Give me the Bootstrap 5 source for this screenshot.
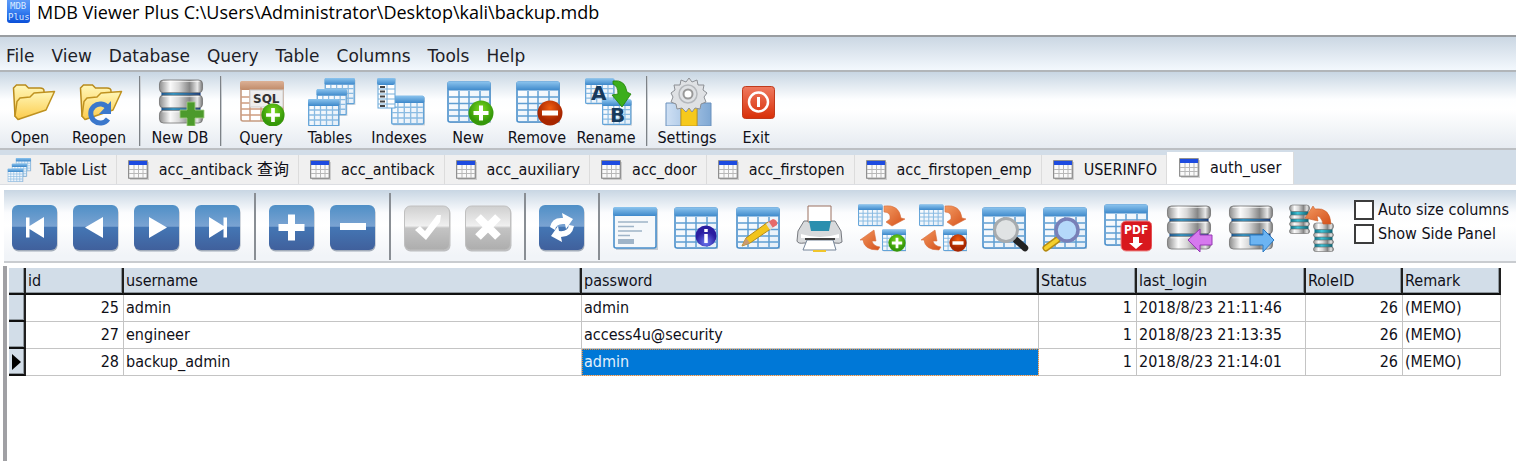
<!DOCTYPE html>
<html lang="en">
<head>
<meta charset="utf-8">
<meta name="viewport" content="width=device-width, initial-scale=1">
<title>MDB Viewer Plus</title>
<link rel="stylesheet" href="https://cdn.jsdelivr.net/npm/bootstrap@5.3.0/dist/css/bootstrap.min.css">
<script src="https://cdn.jsdelivr.net/npm/bootstrap@5.3.0/dist/js/bootstrap.bundle.min.js" defer></script>
<style>
  body { font-family: "DejaVu Sans Condensed", "DejaVu Sans", "Noto Sans CJK SC", sans-serif; font-size: 16px; line-height: 20px; color: #101018; background: #fff; }
  svg { display: block; flex: none; }
  .titlebar { height: 35px; padding-left: 7px; gap: 6px; font-family: "Open Sans", "Noto Sans", sans-serif; font-size: 18px; line-height: 24px; color: #000; }
  .menubar { height: 37px; padding: 4px 0 0 6px; gap: 17px; border-top: 2px solid #999da1; border-bottom: 2px solid #b1b5b9; background: linear-gradient(#cbd7e3, #f3f8fd); font-family: "DejaVu Sans", sans-serif; font-size: 17px; }
  .menubar a { color: #1e1e28; text-decoration: none; }
  .mainbar { height: 78px; gap: 9px; background: linear-gradient(#c8d6e3, #fdfeff 36%, #fff 50%, #e6ebf1); border-bottom: 2px solid #bcbfc3; }
  .tool { width: 60px; padding: 5px 0 0; border: 0; background: none; color: inherit; white-space: nowrap; }
  .tool svg { margin: 0 0 0 8px; }
  .tool span { display: flex; justify-content: center; margin-top: 2px; }
  .rule { width: 1px; margin: 4px 1px 2px; background: #7d8287; box-shadow: 1px 0 #c9ced3; }
  .tabstrip { height: 35px; padding-top: 2px; background: #d2dde8; border-bottom: 1px solid #dcdee2; }
  .sheet { height: 29px; padding: 0 9px 0 11px; gap: 10px; border: 0; border-right: 1px solid #dcdcdc; background: #f0f0f0; color: inherit; white-space: nowrap; }
  .sheet:first-child { padding-left: 7px; gap: 8px; }
  .sheet.current { height: 32px; padding: 0 12px; background: #fff; }
  .navbar-strip { height: 73px; margin: 5px 0 0 4px; padding-left: 7px; background: linear-gradient(#c8d6e3, #fbfcfe 32%, #fff 50%, #f1f4f8 92%); border-bottom: 2px solid #c9ccd0; }
  .tools2 { gap: 13px; padding-top: 14px; }
  .tools2.wide { width: 724px; gap: 0; }
  .tools2 button { border: 0; padding: 0; background: none; width: 48px; height: 48px; }
  .navbar-strip .rule { width: 2px; margin: 3px 12px 1px; background: #898e94; box-shadow: none; }
  .opts { padding: 10px 0 0 18px; gap: 4px; white-space: nowrap; }
  .opts input { appearance: none; flex: none; width: 20px; height: 20px; margin: 0 4px 0 0; border: 2px solid #3c3c3c; background: #fff; }
  .gridpane { min-height: 195px; margin: 3px 0 0 3px; border-left: 4px solid #a0a0a4; padding: 2px 0 0 2px; }
  .datagrid { table-layout: fixed; width: 1492px; border-collapse: separate; border-spacing: 0; line-height: 20px; }
  .datagrid th { height: 27px; padding: 0 2px; font-weight: 400; background: #d2dde8; border-right: 2px solid #202020; border-bottom: 2px solid #101010; box-shadow: inset -1px -1px #8f989f; }
  .datagrid td { height: 27px; padding: 0 4px 0 2px; border-right: 1px solid #c4c4c4; border-bottom: 1px solid #c4c4c4; white-space: nowrap; }
  .datagrid tbody th { padding: 0 0 0 3px; }
  .datagrid td.picked { background: #0078d7; color: #e4f0fb; outline: 1px dotted #e08a3c; outline-offset: -1px; }
</style>
</head>
<body>
<svg width="0" height="0" class="position-absolute" aria-hidden="true">
  <defs>
    <linearGradient id="gHead" x2="0" y2="1"><stop stop-color="#8cc4ee"/><stop offset="1" stop-color="#3d88ca"/></linearGradient>
    <linearGradient id="gBrown" x2="0" y2="1"><stop stop-color="#dcb196"/><stop offset="1" stop-color="#c08a68"/></linearGradient>
    <linearGradient id="gBody" x2="1" y2="1"><stop stop-color="#fff"/><stop offset="1" stop-color="#e4eef8"/></linearGradient>
    <linearGradient id="gFold" x2="0" y2="1"><stop stop-color="#fff7b8"/><stop offset="1" stop-color="#fccb4b"/></linearGradient>
    <linearGradient id="gMetal"><stop stop-color="#8d8d8d"/><stop offset=".25" stop-color="#fafafa"/><stop offset=".45" stop-color="#d8d8d8"/><stop offset=".7" stop-color="#868686"/><stop offset=".88" stop-color="#e8e8e8"/><stop offset="1" stop-color="#777"/></linearGradient>
    <linearGradient id="gBand"><stop stop-color="#16508e"/><stop offset=".3" stop-color="#2a9bd0"/><stop offset="1" stop-color="#163a7c"/></linearGradient>
    <linearGradient id="gTeal"><stop stop-color="#0e6d80"/><stop offset=".4" stop-color="#40c4d8"/><stop offset="1" stop-color="#0d6272"/></linearGradient>
    <linearGradient id="gBlue" x2="0" y2="1"><stop stop-color="#4f8fc6"/><stop offset=".47" stop-color="#7aa3d2"/><stop offset=".5" stop-color="#4476b4"/><stop offset="1" stop-color="#40609c"/></linearGradient>
    <linearGradient id="gGray" x2="0" y2="1"><stop stop-color="#cfcfcf"/><stop offset=".45" stop-color="#f0f0f0"/><stop offset=".5" stop-color="#c4c4c4"/><stop offset="1" stop-color="#adadad"/></linearGradient>
    <radialGradient id="gGreen" cy=".35"><stop stop-color="#7ddc1e"/><stop offset="1" stop-color="#36980a"/></radialGradient>
    <radialGradient id="gRed" cy=".3"><stop stop-color="#ef5d10"/><stop offset="1" stop-color="#a82600"/></radialGradient>
    <radialGradient id="gInfo" cy=".8"><stop stop-color="#6d78f0"/><stop offset="1" stop-color="#2a1ea0"/></radialGradient>
    <linearGradient id="gExit" x2="0" y2="1"><stop stop-color="#ef7a60"/><stop offset="1" stop-color="#d82f08"/></linearGradient>
    <linearGradient id="gOrange" x2="1" y2="1"><stop stop-color="#f39a62"/><stop offset="1" stop-color="#d4501a"/></linearGradient>
    <linearGradient id="gApp" x2="0" y2="1"><stop stop-color="#6aa2f8"/><stop offset=".5" stop-color="#3f86f4"/><stop offset="1" stop-color="#0a4fd8"/></linearGradient>
    <linearGradient id="gTool"><stop stop-color="#cfe0f4"/><stop offset="1" stop-color="#7fa8d4"/></linearGradient>

    <symbol id="tbl" viewBox="0 0 45 43">
      <path d="M3 2h41v40H3z" fill="#8b98a6" opacity=".45"/>
      <rect x="1" y="1" width="42" height="40" rx="2" fill="url(#gBody)" stroke="#4a8fcb" stroke-width="1.6"/>
      <path d="M12 10v30M22 10v30M33 10v30M2 16h40M2 22.500h40M2 29h40M2 35h40" stroke="#5f9ed2" stroke-width="1.500"/>
      <rect x=".5" y=".5" width="43" height="9" rx="2" fill="url(#gHead)"/>
    </symbol>
    <symbol id="tblS" viewBox="0 0 32 28">
      <path d="M2 2h30v26H2z" fill="#8b98a6" opacity=".4"/>
      <rect x=".7" y=".7" width="30" height="26" rx="1" fill="url(#gBody)" stroke="#62a3d8" stroke-width="1.300"/>
      <path d="M6.500 7v19M12.500 7v19M18.500 7v19M24.500 7v19M1 11h29M1 16h29M1 21h29" stroke="#8abbe2" stroke-width="1.300"/>
      <rect width="31.400" height="7" rx="1.500" fill="url(#gHead)"/>
    </symbol>
    <symbol id="plus" viewBox="0 0 26 26"><circle cx="13" cy="13" r="12.500" fill="url(#gGreen)"/><path d="M13 5.500v15M5.500 13h15" stroke="#fff" stroke-width="4"/></symbol>
    <symbol id="minus" viewBox="0 0 26 26"><circle cx="13" cy="13" r="12.500" fill="url(#gRed)"/><path d="M5 13h16" stroke="#fff" stroke-width="5"/></symbol>
    <symbol id="folder" viewBox="0 0 44 38">
      <path d="M1.500 5l3-3h9l3 3H28q4 0 4 3v7L7 36l-4-3z" fill="url(#gFold)" stroke="#b88a1c" stroke-width="1.500"/>
      <path d="M6 36.500L3 33 5 18.500 8 15l10-1 4-4 20.500-1.500L34 27z" fill="url(#gFold)" stroke="#bf9220" stroke-width="1.500" stroke-linejoin="round"/>
    </symbol>
    <symbol id="disks" viewBox="0 0 46 46">
      <path d="M3 12h40v22H3z" fill="url(#gBand)"/>
      <g fill="url(#gMetal)" stroke="#707070" stroke-width=".8"><rect x="1" y="1" width="44" height="13" rx="4"/><rect x="1" y="16.500" width="44" height="13" rx="4"/><rect x="1" y="32" width="44" height="13" rx="4"/></g>
      <path d="M4 2.500h38M4 18h38M4 33.500h38" stroke="#fff" opacity=".7"/>
    </symbol>
    <symbol id="can" viewBox="0 0 22 30">
      <rect x="2" y="3" width="18" height="24" fill="url(#gTeal)"/>
      <g fill="url(#gMetal)" stroke="#666" stroke-width=".6"><rect x="1" y="1" width="20" height="6.500" rx="3"/><rect x="1" y="11" width="20" height="4" rx="2"/><rect x="1" y="18" width="20" height="4" rx="2"/><rect x="1" y="25" width="20" height="4.500" rx="2"/></g>
    </symbol>
    <symbol id="blue" viewBox="0 0 48 48"><rect x="1.500" y="2.500" width="45" height="45" rx="6" fill="#52647c" opacity=".5"/><rect x="1" y="1" width="45" height="45" rx="6" fill="url(#gBlue)"/></symbol>
    <symbol id="gray" viewBox="0 0 48 48"><rect x="1.500" y="3" width="46" height="44.500" rx="6" fill="#999" opacity=".6"/><rect x="1.500" y="2" width="45" height="44" rx="6" fill="url(#gGray)" stroke="#c0c0c0"/></symbol>
    <symbol id="swap" viewBox="0 0 48 48">
      <use href="#tblS" width="25" height="23"/>
      <path d="M26 2Q41 0 43 14L47 15 34 22 28 18 32 15Q33 8 26 8z" fill="url(#gOrange)" stroke="#d8713f" stroke-width=".6"/>
      <path d="M2 36L16 26 18 37 14 37Q15 42 22 43L20 46Q6 46 5 36z" fill="url(#gOrange)" stroke="#d8713f" stroke-width=".6"/>
      <use href="#tblS" x="24" y="25" width="25" height="23"/>
    </symbol>
    <symbol id="sheet" viewBox="0 0 21 20">
      <path d="M2 2h19v18H2z" fill="#aaa" opacity=".5"/><rect x=".7" y=".7" width="18.500" height="17.500" fill="#fafafa" stroke="#777"/>
      <path d="M6 5v13M10.500 5v13M15 5v13M1 9.500h18M1 13.500h18" stroke="#b8b8b8"/><path d="M1 1h18v4H1z" fill="#1d4be0"/>
    </symbol>
  </defs>
</svg>

<header class="titlebar d-flex">
  <svg width="24" height="24" viewBox="0 0 24 24"><rect y="-4" width="23" height="27" rx="3" fill="url(#gApp)"/><g fill="#dcebff" font-family="DejaVu Sans Mono" font-size="9"><text x="3" y="9">MDB</text><text x="1" y="20">Plus</text></g></svg>
  <span>MDB Viewer Plus C:\Users\Administrator\Desktop\kali\backup.mdb</span>
</header>

<nav class="menubar d-flex align-items-center">
  <a href="#">File</a><a href="#">View</a><a href="#">Database</a><a href="#">Query</a><a href="#">Table</a><a href="#">Columns</a><a href="#">Tools</a><a href="#">Help</a>
</nav>

<div class="mainbar d-flex" role="toolbar" aria-label="Main">
  <button class="tool"><svg width="48" height="48"><use href="#folder" x="4" y="5" width="44" height="38"/></svg><span>Open</span></button>
  <button class="tool"><svg width="48" height="48"><use href="#folder" x="2" y="5" width="44" height="38"/><path d="M31 30A9.500 9.500 0 1 0 31 41" fill="none" stroke="#3b78cc" stroke-width="5"/><path d="M34 23V36H22z" fill="#3b78cc"/></svg><span>Reopen</span></button>
  <div class="rule"></div>
  <button class="tool"><svg width="48" height="48"><use href="#disks" x="0" y="1" width="46" height="45"/><path d="M29 24h8v8h9v8h-9v8h-8v-8h-7v-8h7z" fill="#4c9a2c" stroke="#a8d08c" stroke-width=".8"/></svg><span>New DB</span></button>
  <div class="rule"></div>
  <button class="tool"><svg width="48" height="48"><rect x="2" y="4" width="42" height="39" rx="2" fill="#fff" stroke="#c59a80" stroke-width="1.600"/><path d="M11 12v31M22 12v31M33 12v31M2 19h42M2 25h42M2 31h42M2 37h42" stroke="#ce9d80" stroke-width="1.500"/><rect x="1" y="3" width="44" height="9" rx="2" fill="url(#gBrown)"/><rect x="11" y="12" width="33" height="17" fill="#eee" stroke="#ccc"/><text x="14" y="25" font-family="DejaVu Sans" font-weight="700" font-size="12" fill="#333">SQL</text><use href="#plus" x="22" y="25" width="24" height="24"/></svg><span>Query</span></button>
  <button class="tool"><svg width="48" height="48"><use href="#tblS" x="16" width="32" height="27"/><use href="#tblS" x="8" y="11" width="32" height="27"/><use href="#tblS" x="0" y="21" width="32" height="28"/></svg><span>Tables</span></button>
  <button class="tool"><svg width="48" height="48"><use href="#tblS" x="14" y="17" width="34" height="31"/><rect x="1" y="1" width="17" height="29" fill="#fff" stroke="#65a5d8"/><path d="M10 6v24M1 11h17M1 16h17M1 21h17M1 26h17" stroke="#79afd9"/><path d="M3 9h5M3 13.500h5M3 18.500h5M3 23.500h5M3 28h5" stroke="#444" stroke-width="2"/><rect width="18" height="7" rx="2" fill="url(#gHead)"/></svg><span>Indexes</span></button>
  <button class="tool"><svg width="48" height="48"><use href="#tbl" x="1" y="3" width="45" height="43"/><use href="#plus" x="22" y="22" width="26" height="26"/></svg><span>New</span></button>
  <button class="tool"><svg width="48" height="48"><use href="#tbl" x="1" y="3" width="45" height="43"/><use href="#minus" x="22" y="22" width="26" height="26"/></svg><span>Remove</span></button>
  <button class="tool"><svg class="overflow-visible" width="48" height="48"><use href="#tblS" x="1" width="30" height="27"/><use href="#tblS" x="18" y="21" width="30" height="27"/><g font-family="DejaVu Sans" font-weight="700" font-size="20" fill="#173a5c"><text x="7" y="22">A</text><text x="26" y="44">B</text></g><path d="M29 3Q41 1 43 14L47 16 38 29 28 17 34 16Q34 8 29 6z" fill="#3cae1c" stroke="#238208" stroke-width=".8"/></svg><span>Rename</span></button>
  <div class="rule"></div>
  <button class="tool"><svg width="48" height="48"><path d="M1 25h15v23H1zM32 25h14v23H32z" fill="url(#gTool)" stroke="#6a91bd"/><path d="M16 28h16v20H16z" fill="#f6c91c" stroke="#c89b18"/><path d="M24 0l3 4 5-2 1 5 6 0-1 5 4 3-3 4 2 5-5 2-1 5-5-1-3 4-3-4-3 4-4-4-5 1-1-5-5-2 2-5-2-4 4-3-1-5 6 0 1-5 5 2z" fill="#dfe1e4" stroke="#8c8f94"/><circle cx="23" cy="16" r="9" fill="none" stroke="#b5b8bc" stroke-width="1.500"/><circle cx="23" cy="16" r="4.500" fill="#fff" stroke="#999" stroke-width="2"/></svg><span>Settings</span></button>
  <button class="tool"><svg width="48" height="48"><rect x="8.500" y="8.500" width="32" height="32" rx="3" fill="url(#gExit)" stroke="#c03a1c"/><circle cx="24.500" cy="24" r="9.500" fill="none" stroke="#fff" stroke-width="2.500"/><path d="M24.500 19v10" stroke="#fff" stroke-width="3"/></svg><span>Exit</span></button>
</div>

<div class="tabstrip d-flex align-items-end" role="tablist">
  <button class="sheet d-flex align-items-center" role="tab"><svg width="25" height="24" viewBox="0 0 48 48"><use href="#tblS" x="16" width="32" height="27"/><use href="#tblS" x="8" y="11" width="32" height="27"/><use href="#tblS" x="0" y="21" width="32" height="28"/></svg>Table List</button>
  <button class="sheet d-flex align-items-center" role="tab"><svg width="21" height="20"><use href="#sheet"/></svg>acc_antiback 查询</button>
  <button class="sheet d-flex align-items-center" role="tab"><svg width="21" height="20"><use href="#sheet"/></svg>acc_antiback</button>
  <button class="sheet d-flex align-items-center" role="tab"><svg width="21" height="20"><use href="#sheet"/></svg>acc_auxiliary</button>
  <button class="sheet d-flex align-items-center" role="tab"><svg width="21" height="20"><use href="#sheet"/></svg>acc_door</button>
  <button class="sheet d-flex align-items-center" role="tab"><svg width="21" height="20"><use href="#sheet"/></svg>acc_firstopen</button>
  <button class="sheet d-flex align-items-center" role="tab"><svg width="21" height="20"><use href="#sheet"/></svg>acc_firstopen_emp</button>
  <button class="sheet d-flex align-items-center" role="tab"><svg width="21" height="20"><use href="#sheet"/></svg>USERINFO</button>
  <button class="sheet current d-flex align-items-center" role="tab" aria-selected="true"><svg width="21" height="20"><use href="#sheet"/></svg>auth_user</button>
</div>

<div class="navbar-strip d-flex" role="toolbar" aria-label="Records">
  <div class="tools2 d-flex">
    <button aria-label="First"><svg width="48" height="48"><use href="#blue"/><path d="M15 13.500h3.500v8.500L33 13v21L18.500 25v8.500H15z" fill="#fff"/></svg></button>
    <button aria-label="Previous"><svg width="48" height="48"><use href="#blue"/><path d="M13 23.500L31 13v21z" fill="#fff"/></svg></button>
    <button aria-label="Next"><svg width="48" height="48"><use href="#blue"/><path d="M34 23.500L16 13v21z" fill="#fff"/></svg></button>
    <button aria-label="Last"><svg width="48" height="48"><use href="#blue"/><path d="M33 13.500h-3.500v8.500L15 13v21L29.500 25v8.500H33z" fill="#fff"/></svg></button>
  </div>
  <div class="rule"></div>
  <div class="tools2 d-flex">
    <button aria-label="Insert"><svg width="48" height="48"><use href="#blue"/><path d="M23.500 10.500v26M10.500 23.500h26" stroke="#fff" stroke-width="7"/></svg></button>
    <button aria-label="Delete"><svg width="48" height="48"><use href="#blue"/><path d="M11 22.500h26" stroke="#fff" stroke-width="7"/></svg></button>
  </div>
  <div class="rule"></div>
  <div class="tools2 d-flex">
    <button aria-label="Post"><svg width="48" height="48"><use href="#gray"/><path d="M12 26l5-4 5 5L34 11l4 0-1 7-14 18z" fill="#fff"/></svg></button>
    <button aria-label="Cancel"><svg width="48" height="48"><use href="#gray"/><path d="M14 13l20 20M34 13L14 33" stroke="#fff" stroke-width="8"/></svg></button>
  </div>
  <div class="rule"></div>
  <div class="tools2 d-flex">
    <button aria-label="Refresh"><svg width="48" height="48"><use href="#blue"/><path d="M12 23Q14 13 25 14L24 9 35 15 28 25 27 20Q18 19 17 26zM36 22Q34 33 23 33L24 38 13 32 20 22 21 27Q30 28 31 21z" fill="#fff"/></svg></button>
  </div>
  <div class="rule"></div>
  <div class="tools2 wide d-flex justify-content-between">
    <button aria-label="Form view"><svg width="48" height="48"><path d="M4 5h42v41H4z" fill="#8b98a6" opacity=".45"/><rect x="2" y="4" width="42" height="40" rx="2" fill="#f5f8fb" stroke="#4a8fcb" stroke-width="1.600"/><path d="M6 18h30M6 22.500h16M6 27h24M6 31.500h12" stroke="#9fb4c8" stroke-width="1.500"/><path d="M6 35h16v5H6z" fill="#9fb4c8"/><rect x="1" y="3" width="44" height="9" rx="2" fill="url(#gHead)"/></svg></button>
    <button aria-label="Table info"><svg width="48" height="48"><use href="#tbl" x="1" y="3" width="45" height="43"/><circle cx="33" cy="32" r="10.500" fill="url(#gInfo)"/><path d="M33 30v9M33 25v3" stroke="#fff" stroke-width="3.500"/></svg></button>
    <button aria-label="Edit design"><svg width="48" height="48"><use href="#tbl" x="1" y="3" width="45" height="43"/><path d="M7 42L11 34 33 18 37 24 15 39z" fill="#f2c41c" stroke="#b58a18"/><path d="M7 42l4-8 4 5z" fill="#c99a72"/><path d="M33 18l5-3q5 1 4 6l-5 3z" fill="#e66a6a"/><path d="M31 20l3-2 4 6-3 2z" fill="#ddd"/></svg></button>
    <button aria-label="Print"><svg width="48" height="48"><path d="M8 17h31l6 10 1 11q-2 2-7 1H8q-6 1-7-2l1-10z" fill="#d8dadc" stroke="#777a80"/><path d="M12 2h23v16H12z" fill="#fff" stroke="#9a7060"/><path d="M13 17h22l-2 10H15z" fill="#2b8fae"/><path d="M5 30q19 6 38 0v4H5z" fill="#fff"/><path d="M11 36h26l3 10H7z" fill="#fff" stroke="#76869a"/><path d="M17 46h13v2H17z" fill="#f0c52c"/><path d="M9 35h30" stroke="#444" stroke-width="2"/></svg></button>
    <button aria-label="Import"><svg width="48" height="48"><use href="#swap"/><use href="#plus" x="30" y="30" width="18" height="18"/></svg></button>
    <button aria-label="Export"><svg width="48" height="48"><use href="#swap"/><use href="#minus" x="30" y="30" width="18" height="18"/></svg></button>
    <button aria-label="Find"><svg width="48" height="48"><use href="#tbl" x="1" y="3" width="45" height="43"/><path d="M35 36l9 8" stroke="#222" stroke-width="6.500" stroke-linecap="round"/><circle cx="25" cy="26" r="11.500" fill="#e0e3e4" stroke="#a7abae" stroke-width="3"/></svg></button>
    <button aria-label="Filter"><svg width="48" height="48"><use href="#tbl" x="1" y="3" width="45" height="43"/><path d="M15 36L4 44" stroke="#b58a10" stroke-width="7" stroke-linecap="round"/><path d="M15 36L4 44" stroke="#f4d02c" stroke-width="4" stroke-linecap="round"/><circle cx="25" cy="26" r="11" fill="#b5d9fa" stroke="#7880b8" stroke-width="3.500"/></svg></button>
    <button aria-label="Save as PDF"><svg width="48" height="48"><use href="#tbl" x="0" y="0" width="45" height="43"/><rect x="17" y="17" width="31" height="30" rx="5" fill="#d8181e" stroke="#ee8a8a"/><text x="20" y="30" font-family="DejaVu Sans Condensed" font-weight="700" font-size="12" fill="#fff">PDF</text><path d="M29 33h6v6h4l-7 6-7-6h4z" fill="#fff"/></svg></button>
    <button aria-label="Import database"><svg width="48" height="48"><use href="#disks" x="1" y="1" width="46" height="45"/><path d="M23 36L35 25v6h12v10H35v7z" fill="#d679ee" stroke="#9638b4"/></svg></button>
    <button aria-label="Export database"><svg width="48" height="48"><use href="#disks" x="1" y="1" width="46" height="45"/><path d="M47 36L36 25v6H23v10h13v7z" fill="#6cb4f2" stroke="#2a78c0"/></svg></button>
    <button aria-label="Compact database"><svg width="48" height="48"><use href="#can" x="0" y="0" width="23" height="30"/><use href="#can" x="24" y="18" width="23" height="30"/><path d="M17 14L25 2l2 3Q42 3 43 20H35Q33 12 29 12l1 5z" fill="url(#gOrange)" stroke="#c95f2c" stroke-width=".6"/></svg></button>
  </div>
  <div class="opts d-flex flex-column">
    <label class="d-flex align-items-center"><input type="checkbox">Auto size columns</label>
    <label class="d-flex align-items-center"><input type="checkbox">Show Side Panel</label>
  </div>
</div>

<main class="gridpane">
  <table class="datagrid">
    <colgroup><col style="width:17px"><col style="width:98px"><col style="width:458px"><col style="width:457px"><col style="width:98px"><col style="width:169px"><col style="width:97px"><col style="width:98px"></colgroup>
    <thead><tr><th></th><th>id</th><th>username</th><th>password</th><th>Status</th><th>last_login</th><th>RoleID</th><th>Remark</th></tr></thead>
    <tbody>
      <tr><th></th><td class="text-end">25</td><td>admin</td><td>admin</td><td class="text-end">1</td><td>2018/8/23 21:11:46</td><td class="text-end">26</td><td>(MEMO)</td></tr>
      <tr><th></th><td class="text-end">27</td><td>engineer</td><td>access4u@security</td><td class="text-end">1</td><td>2018/8/23 21:13:35</td><td class="text-end">26</td><td>(MEMO)</td></tr>
      <tr><th><svg width="10" height="16"><path d="M0 0l9 8-9 8z"/></svg></th><td class="text-end">28</td><td>backup_admin</td><td class="picked">admin</td><td class="text-end">1</td><td>2018/8/23 21:14:01</td><td class="text-end">26</td><td>(MEMO)</td></tr>
    </tbody>
  </table>
</main>
</body>
</html>
